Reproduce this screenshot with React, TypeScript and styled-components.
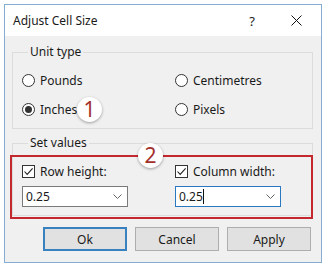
import styled, { createGlobalStyle } from 'styled-components'

const GlobalStyle = createGlobalStyle`
  body {
    margin: 0;
    background-color: #fff;
    font-family: "Noto Sans", "Open Sans", sans-serif;
    font-size: 12px;
    color: #1a1a1a;
  }
`;

interface RadioProps {
  label: string;
  checked?: boolean;
}

const Radio = ({ label, checked }: RadioProps) => (
  <OptionRow>
    <RadioCircle $checked={checked} />
    <span>{label}</span>
  </OptionRow>
)

const Check = ({ label }: { label: string }) => (
  <OptionRow>
    <CheckBox>
      <svg width="11" height="11" viewBox="0 0 11 11">
        <polyline points="1.5,5.5 4.2,8.4 9.6,2.4" fill="none" stroke="#222" strokeWidth="1.1" />
      </svg>
    </CheckBox>
    <span>{label}</span>
  </OptionRow>
)

const Combo = ({ value, focused }: { value: string; focused?: boolean }) => (
  <ComboBox $focused={focused}>
    <span>
      {value}
      {focused && <Caret />}
    </span>
    <svg width="9" height="5" viewBox="0 0 9 5">
      <polyline points="0.5,0.5 4.5,4.5 8.5,0.5" fill="none" stroke="#666" strokeWidth="1" />
    </svg>
  </ComboBox>
)

const App = () => {
  return (
    <>
      <GlobalStyle />
      <Window>
        <TitleBar>
          <span className="title">Adjust Cell Size</span>
          <span className="help">?</span>
          <span className="close">
            <svg width="11" height="11" viewBox="0 0 11 11">
              <path d="M0.5 0.5 L10.5 10.5 M10.5 0.5 L0.5 10.5" stroke="#111" strokeWidth="1" />
            </svg>
          </span>
        </TitleBar>
        <Body>
          <GroupBox>
            <legend>Unit type</legend>
            <OptionGrid>
              <Radio label="Pounds" />
              <Radio label="Centimetres" />
              <Radio label="Inches" checked />
              <Radio label="Pixels" />
            </OptionGrid>
          </GroupBox>
          <GroupBox $last>
            <legend>Set values</legend>
            <ValueGrid>
              <Check label="Row height:" />
              <Check label="Column width:" />
              <Combo value="0.25" />
              <Combo value="0.25" focused />
            </ValueGrid>
          </GroupBox>
          <ButtonRow>
            <DialogButton $primary>Ok</DialogButton>
            <DialogButton>Cancel</DialogButton>
            <DialogButton>Apply</DialogButton>
          </ButtonRow>
        </Body>
        <Highlight />
        <Badge $x={72} $y={92}>1</Badge>
        <Badge $x={133} $y={138}>2</Badge>
      </Window>
    </>
  )
}

const Window = styled.div`
  position: relative;
  box-sizing: border-box;
  width: 318px;
  height: 259px;
  margin: 4px 0 0 4px;
  border: 1px solid #86acd2;
  background-color: #f0f0f0;
  display: flex;
  flex-direction: column;
`;

const TitleBar = styled.div`
  display: flex;
  align-items: center;
  height: 31px;
  padding: 0 0 0 8px;
  background-color: #fff;

  .title {
    flex: 1;
    font-size: 12px;
  }

  .help {
    width: 14px;
    margin-right: 32px;
    font-size: 13px;
    text-align: center;
  }

  .close {
    display: flex;
    margin-right: 19px;
  }
`;

const Body = styled.div`
  padding: 8px 8px 0 7px;
  display: flex;
  flex-direction: column;
`;

const GroupBox = styled.fieldset<{ $last?: boolean }>`
  margin: ${({ $last }) => ($last ? '6px 0 0' : '0')};
  padding: ${({ $last }) => ($last ? '12px 9px 8px' : '6px 9px 4px')};
  border: 1px solid #dcdcdc;
  min-width: 0;

  legend {
    margin-left: 6px;
    padding: 0 2px;
    line-height: 16px;
    font-size: 12px;
  }
`;

const OptionGrid = styled.div`
  display: grid;
  grid-template-columns: 153px 1fr;
  grid-auto-rows: 29px;
  align-items: center;
`;

const ValueGrid = styled.div`
  display: grid;
  grid-template-columns: 153px 1fr;
  row-gap: 7px;
  align-items: center;
`;

const OptionRow = styled.label`
  display: flex;
  align-items: center;
  gap: 5px;
  height: 16px;
  font-size: 12px;
`;

const RadioCircle = styled.span<{ $checked?: boolean }>`
  position: relative;
  box-sizing: border-box;
  width: 13px;
  height: 13px;
  border: 1px solid #333;
  border-radius: 50%;
  background-color: #fff;

  &::after {
    content: '';
    display: ${({ $checked }) => ($checked ? 'block' : 'none')};
    position: absolute;
    left: 2px;
    top: 2px;
    width: 7px;
    height: 7px;
    border-radius: 50%;
    background-color: #333;
  }
`;

const CheckBox = styled.span`
  box-sizing: border-box;
  width: 13px;
  height: 13px;
  border: 1px solid #333;
  background-color: #fff;
  display: flex;
  align-items: center;
  justify-content: center;
`;

const ComboBox = styled.div<{ $focused?: boolean }>`
  box-sizing: border-box;
  width: 106px;
  height: 21px;
  padding: 0 5px 0 3px;
  border: 1px solid ${({ $focused }) => ($focused ? '#2a78c2' : '#7a7a7a')};
  background-color: #fff;
  display: flex;
  align-items: center;
  justify-content: space-between;
  font-size: 12px;

  span {
    display: flex;
    align-items: center;
  }
`;

const Caret = styled.i`
  display: inline-block;
  width: 1px;
  height: 15px;
  background-color: #111;
`;

const ButtonRow = styled.div`
  display: flex;
  justify-content: flex-end;
  gap: 8px;
  margin-top: 11px;
  padding-right: 2px;
`;

const DialogButton = styled.button<{ $primary?: boolean }>`
  box-sizing: border-box;
  width: 84px;
  height: 24px;
  padding: 0;
  border: ${({ $primary }) => ($primary ? '2px solid #3a82bf' : '1px solid #adadad')};
  background-color: #e1e1e1;
  font-family: inherit;
  font-size: 12px;
  color: #1a1a1a;
`;

const Highlight = styled.div`
  position: absolute;
  left: 5px;
  top: 150px;
  width: 303px;
  height: 64px;
  box-sizing: border-box;
  border: 2px solid #c4282f;
  pointer-events: none;
`;

const Badge = styled.div<{ $x: number; $y: number }>`
  position: absolute;
  left: ${({ $x }) => $x}px;
  top: ${({ $y }) => $y}px;
  width: 25px;
  height: 25px;
  border-radius: 50%;
  background-color: #fff;
  box-shadow: 0 1px 3px rgba(0, 0, 0, .35);
  display: flex;
  align-items: center;
  justify-content: center;
  font-size: 21px;
  line-height: 1;
  color: #a2302b;
`;

export default App
